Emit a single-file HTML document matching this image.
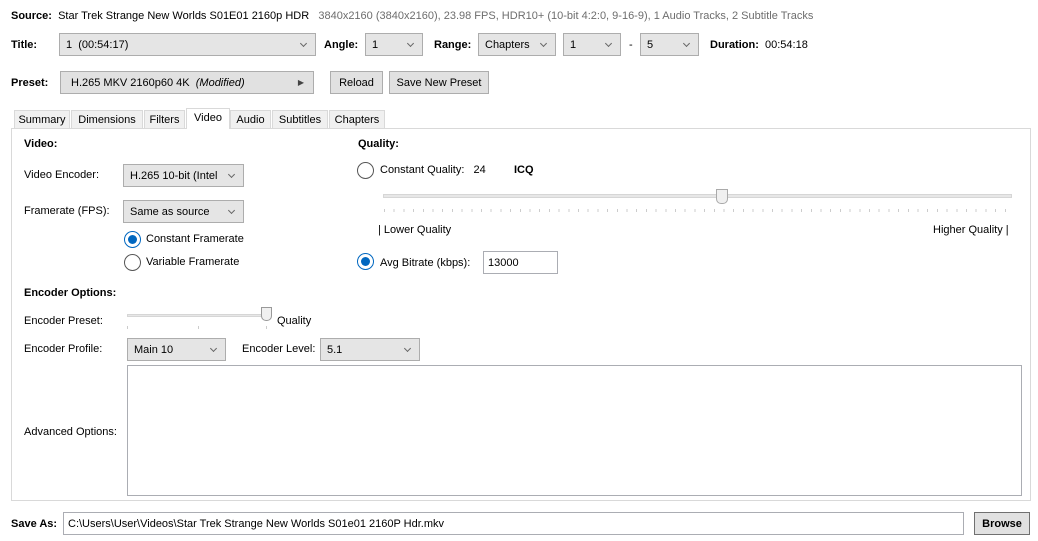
<!DOCTYPE html>
<html><head><meta charset="utf-8"><style>
*{box-sizing:border-box;margin:0;padding:0}
body{width:1038px;height:541px;background:#fff;font-family:"Liberation Sans",sans-serif;font-size:11px;color:#000;position:relative;overflow:hidden}
.a{position:absolute;white-space:nowrap;line-height:14px}
b{font-weight:bold}
.cb{position:absolute;border:1px solid #adadad;background:#e5e5e5;height:23px;line-height:22px;padding-left:6px;white-space:nowrap}
.cb:after{content:"";position:absolute;right:9px;top:7px;width:4px;height:4px;border-right:1px solid #666;border-bottom:1px solid #666;transform:rotate(45deg)}
.btn{position:absolute;border:1px solid #adadad;background:#e1e1e1;height:23px;line-height:22px;text-align:center;white-space:nowrap}
.tb{position:absolute;border:1px solid #abadb3;background:#fff;height:23px;line-height:22px;padding-left:4px;white-space:nowrap}
.tab{position:absolute;top:110px;height:19px;border:1px solid #d9d9d9;background:#f0f0f0;line-height:18px;text-align:center}
.rad{position:absolute;width:17px;height:17px;border:1px solid #555;border-radius:50%;background:#fff}
.rad.on:after{content:"";position:absolute;left:3px;top:3px;width:9px;height:9px;border-radius:50%;background:#0067c0}
.rad.on{border-color:#0067c0}
</style></head><body>
<div class="a" style="left:11px;top:9px"><b>Source:</b>&nbsp; Star Trek Strange New Worlds S01E01 2160p HDR &nbsp; <span style="color:#6d6d6d">3840x2160 (3840x2160), 23.98 FPS, HDR10+ (10-bit 4:2:0, 9-16-9), 1 Audio Tracks, 2 Subtitle Tracks</span></div>

<div class="a" style="left:11px;top:38px"><b>Title:</b></div>
<div class="cb" style="left:59px;top:33px;width:257px">1&nbsp; (00:54:17)</div>
<div class="a" style="left:324px;top:38px"><b>Angle:</b></div>
<div class="cb" style="left:365px;top:33px;width:58px">1</div>
<div class="a" style="left:434px;top:38px"><b>Range:</b></div>
<div class="cb" style="left:478px;top:33px;width:78px">Chapters</div>
<div class="cb" style="left:563px;top:33px;width:58px">1</div>
<div class="a" style="left:629px;top:38px">-</div>
<div class="cb" style="left:640px;top:33px;width:59px">5</div>
<div class="a" style="left:710px;top:38px"><b>Duration:</b>&nbsp; 00:54:18</div>

<div class="a" style="left:11px;top:76px"><b>Preset:</b></div>
<div class="btn" style="left:60px;top:71px;width:254px;text-align:left;padding-left:10px">H.265 MKV 2160p60 4K&nbsp; <i>(Modified)</i><span style="position:absolute;right:9px;top:0;font-size:8px;color:#444">&#9654;</span></div>
<div class="btn" style="left:330px;top:71px;width:53px">Reload</div>
<div class="btn" style="left:389px;top:71px;width:100px">Save New Preset</div>

<div style="position:absolute;left:11px;top:128px;width:1020px;height:373px;border:1px solid #d9d9d9"></div>
<div class="tab" style="left:14px;width:56px">Summary</div>
<div class="tab" style="left:71px;width:72px">Dimensions</div>
<div class="tab" style="left:144px;width:41px">Filters</div>
<div class="tab" style="left:186px;top:108px;height:21px;width:44px;background:#fff;border-bottom:none">Video</div>
<div class="tab" style="left:230px;width:41px">Audio</div>
<div class="tab" style="left:272px;width:56px">Subtitles</div>
<div class="tab" style="left:329px;width:56px">Chapters</div>

<div class="a" style="left:24px;top:137px"><b>Video:</b></div>
<div class="a" style="left:24px;top:168px">Video Encoder:</div>
<div class="cb" style="left:123px;top:164px;width:121px">H.265 10-bit (Intel</div>
<div class="a" style="left:24px;top:204px">Framerate (FPS):</div>
<div class="cb" style="left:123px;top:200px;width:121px">Same as source</div>
<div class="rad on" style="left:124px;top:231px"></div>
<div class="a" style="left:146px;top:232px">Constant Framerate</div>
<div class="rad" style="left:124px;top:254px"></div>
<div class="a" style="left:146px;top:255px">Variable Framerate</div>

<div class="a" style="left:24px;top:286px"><b>Encoder Options:</b></div>
<div class="a" style="left:24px;top:314px">Encoder Preset:</div>
<div style="position:absolute;left:127px;top:314px;width:143px;height:3px;background:#e7e7e7;border:1px solid #d6d6d6"></div>
<div style="position:absolute;left:261px;top:307px;width:11px;height:14px;background:#f0f0f0;border:1px solid #999;border-radius:0 0 5px 5px"></div>
<div style="position:absolute;left:127px;top:326px;width:1px;height:3px;background:#ccc"></div>
<div style="position:absolute;left:198px;top:326px;width:1px;height:3px;background:#ccc"></div>
<div style="position:absolute;left:266px;top:326px;width:1px;height:3px;background:#ccc"></div>
<div class="a" style="left:277px;top:314px">Quality</div>
<div class="a" style="left:24px;top:342px">Encoder Profile:</div>
<div class="cb" style="left:127px;top:338px;width:99px">Main 10</div>
<div class="a" style="left:242px;top:342px">Encoder Level:</div>
<div class="cb" style="left:320px;top:338px;width:100px">5.1</div>
<div class="a" style="left:24px;top:425px">Advanced Options:</div>
<div style="position:absolute;left:127px;top:365px;width:895px;height:131px;border:1px solid #abadb3"></div>

<div class="a" style="left:358px;top:137px"><b>Quality:</b></div>
<div class="rad" style="left:357px;top:162px"></div>
<div class="a" style="left:380px;top:163px">Constant Quality:&nbsp;&nbsp; 24</div>
<div class="a" style="left:514px;top:163px"><b>ICQ</b></div>
<div style="position:absolute;left:383px;top:194px;width:629px;height:4px;background:#e7e7e7;border:1px solid #d6d6d6"></div>
<div style="position:absolute;left:716px;top:189px;width:12px;height:15px;background:#f0f0f0;border:1px solid #aaa;border-radius:0 0 5px 5px"></div>
<div style="position:absolute;left:384px;top:209px;width:628px;height:3px;background:repeating-linear-gradient(90deg,#ccc 0 1px,transparent 1px 9.7px)"></div>
<div class="a" style="left:378px;top:223px">| Lower Quality</div>
<div class="a" style="left:933px;top:223px">Higher Quality |</div>
<div class="rad on" style="left:357px;top:253px"></div>
<div class="a" style="left:380px;top:256px">Avg Bitrate (kbps):</div>
<div class="tb" style="left:483px;top:251px;width:75px">13000</div>

<div class="a" style="left:11px;top:517px"><b>Save As:</b></div>
<div class="tb" style="left:63px;top:512px;width:901px">C:\Users\User\Videos\Star Trek Strange New Worlds S01e01 2160P Hdr.mkv</div>
<div class="btn" style="left:974px;top:512px;width:56px;border-color:#707070"><b>Browse</b></div>
</body></html>
